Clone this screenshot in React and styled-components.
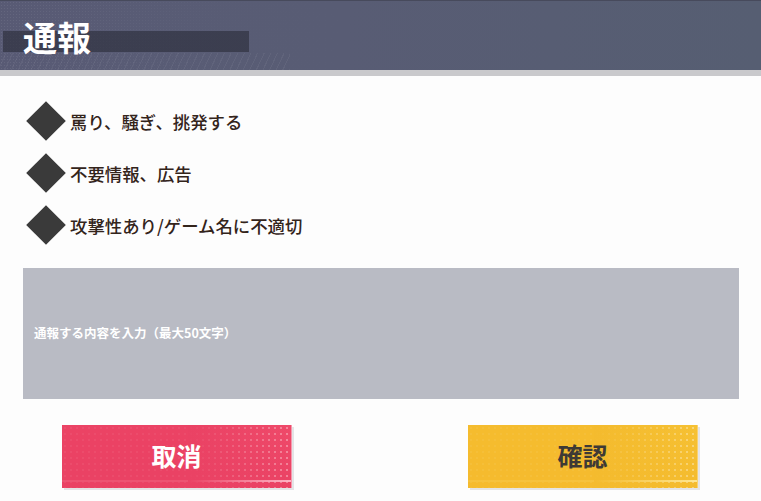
import React from "react";
import styled, { createGlobalStyle } from "styled-components";

const Global = createGlobalStyle`
  html, body { margin: 0; padding: 0; background: #fdfdfd; }
  body { font-family: "Noto Sans CJK JP", "Noto Sans", sans-serif; }
  * { box-sizing: border-box; }
`;

const Page = styled.div`
  width: 761px;
  height: 501px;
  overflow: hidden;
  display: flex;
  flex-direction: column;
  background: #fdfdfd;
`;

const Header = styled.header`
  height: 76px;
  flex: none;
  display: flex;
  align-items: flex-start;
  padding: 16px 0 0 23px;
  border-top: 1px solid #474a5c;
  border-bottom: 6px solid #c9c9cc;
  background-color: #575d73;
  background-image:
    linear-gradient(rgba(46, 48, 62, 0.68), rgba(46, 48, 62, 0.68)),
    repeating-linear-gradient(115deg, rgba(255,255,255,0) 0 5px, rgba(255,255,255,0.05) 5px 6px),
    linear-gradient(90deg, rgba(88,92,116,0) 0%, rgba(88,92,116,0.9) 30%, #585c74 45%, rgba(86,94,114,1) 100%),
    radial-gradient(rgba(255,255,255,0.07) 0.8px, transparent 1px),
    linear-gradient(90deg, #585a74 0%, #5a5c78 35%, #565f72 60%, #565e72 100%);
  background-size: 246px 21px, 290px 17px, 100% 100%, 3px 3px, 100% 100%;
  background-position: 3px 30px, 0 52px, 0 0, 0 0, 0 0;
  background-repeat: no-repeat, no-repeat, no-repeat, repeat, no-repeat;
`;

const Title = styled.h1`
  margin: 0;
  font-size: 34px;
  line-height: 40px;
  font-weight: 700;
  color: #ffffff;
`;

const List = styled.ul`
  list-style: none;
  margin: 0;
  padding: 25px 0 0 26px;
  display: flex;
  flex-direction: column;
  gap: 12px;
`;

const Item = styled.li`
  display: flex;
  align-items: center;
  gap: 4px;
  height: 40px;
`;

const Diamond = styled.span`
  flex: none;
  width: 40px;
  height: 40px;
  display: flex;
  align-items: center;
  justify-content: center;
  &::before {
    content: "";
    width: 28px;
    height: 28px;
    background: #3a3a3a;
    transform: rotate(45deg);
  }
`;

const ItemText = styled.span`
  font-size: 17.4px;
  font-weight: 500;
  color: #33241b;
`;

const InputBox = styled.div`
  margin: 23px 22px 0 23px;
  height: 131px;
  background: #b9bbc4;
  display: flex;
  align-items: center;
  padding: 0 0 2px 11px;
`;

const Placeholder = styled.span`
  font-size: 12.5px;
  font-weight: 700;
  color: #ffffff;
`;

const Buttons = styled.div`
  display: flex;
  justify-content: space-between;
  padding: 26px 63px 0 62px;
`;

const Button = styled.button`
  width: 230px;
  height: 63px;
  border: none;
  border-right: 1px solid ${(p) => p.$edge};
  padding: 0 0 4px;
  font-family: "Noto Sans CJK JP", "Noto Sans", sans-serif;
  font-size: 25px;
  font-weight: 700;
  color: ${(p) => p.$fg};
  box-shadow: 2px 2px 0 #e4e4e6;
  background-color: ${(p) => p.$bg};
  background-image:
    linear-gradient(${(p) => p.$line}, ${(p) => p.$line}),
    radial-gradient(rgba(255,255,255,0.35) 0.9px, transparent 1.3px),
    linear-gradient(180deg, ${(p) => p.$top} 0%, ${(p) => p.$bg} 100%);
  background-size: 100% 2px, 6px 6px, 100% 100%;
  background-position: 0 55px, 0 0, 0 0;
  background-repeat: no-repeat, repeat, no-repeat;
  position: relative;
  cursor: pointer;
  &::after {
    content: "";
    position: absolute;
    inset: 0 0 0 55%;
    background: linear-gradient(90deg, ${(p) => p.$bg} 0%, transparent 100%);
    pointer-events: none;
  }
  &::before {
    content: "";
    position: absolute;
    inset: 0 45% 0 0;
    background: ${(p) => p.$bg};
    opacity: 0.85;
    pointer-events: none;
  }
`;

const Label = styled.span`
  position: relative;
  z-index: 1;
`;

const items = [
  "罵り、騒ぎ、挑発する",
  "不要情報、広告",
  "攻撃性あり/ゲーム名に不適切",
];

export default function App() {
  return (
    <Page>
      <Global />
      <Header>
        <Title>通報</Title>
      </Header>
      <List>
        {items.map((t) => (
          <Item key={t}>
            <Diamond />
            <ItemText>{t}</ItemText>
          </Item>
        ))}
      </List>
      <InputBox>
        <Placeholder>通報する内容を入力（最大50文字）</Placeholder>
      </InputBox>
      <Buttons>
        <Button $bg="#ea4264" $top="#ef4a6a" $fg="#ffffff" $line="rgba(255,190,205,0.9)" $edge="#f59aae">
          <Label>取消</Label>
        </Button>
        <Button $bg="#f4bb2e" $top="#f6c133" $fg="#3e3a35" $line="rgba(255,232,150,0.95)" $edge="#f8d270">
          <Label>確認</Label>
        </Button>
      </Buttons>
    </Page>
  );
}
